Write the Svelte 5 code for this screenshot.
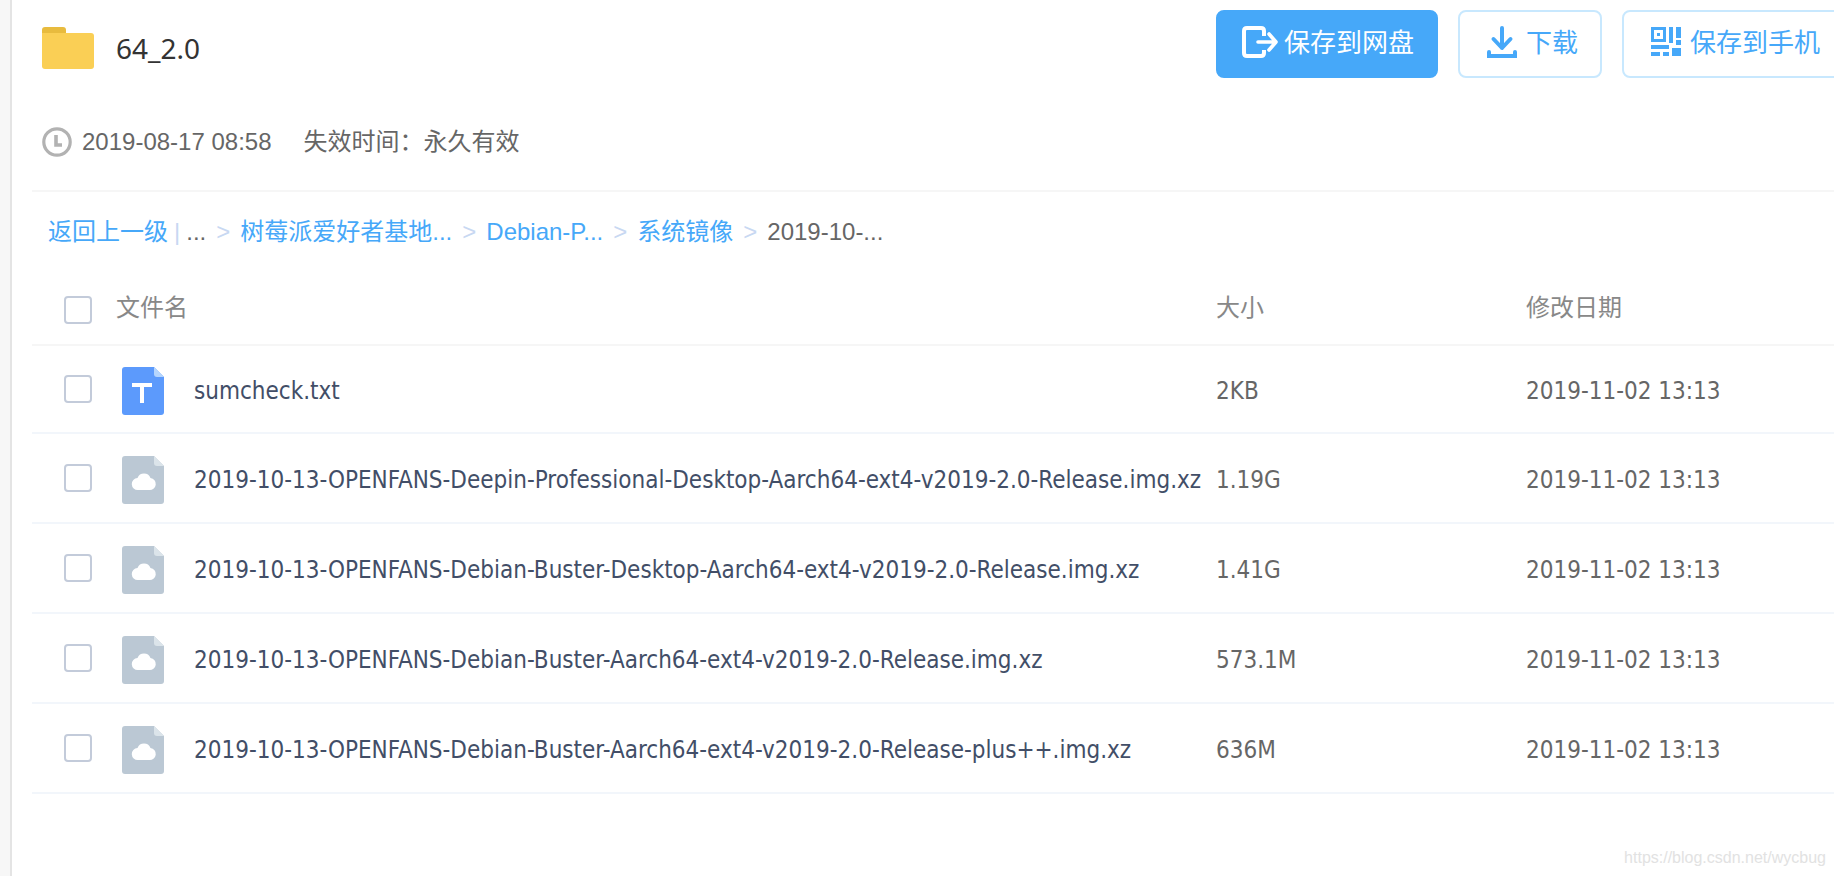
<script lang="ts">
  type FileRow = { name: string; size: string; date: string; kind: "text" | "cloud" };

  const crumbs = ["树莓派爱好者基地...", "Debian-P...", "系统镜像"];

  const files: FileRow[] = [
    {name: "sumcheck.txt", size: "2KB", date: "2019-11-02 13:13", kind: "text"},
    {name: "2019-10-13-OPENFANS-Deepin-Professional-Desktop-Aarch64-ext4-v2019-2.0-Release.img.xz", size: "1.19G", date: "2019-11-02 13:13", kind: "cloud"},
    {name: "2019-10-13-OPENFANS-Debian-Buster-Desktop-Aarch64-ext4-v2019-2.0-Release.img.xz", size: "1.41G", date: "2019-11-02 13:13", kind: "cloud"},
    {name: "2019-10-13-OPENFANS-Debian-Buster-Aarch64-ext4-v2019-2.0-Release.img.xz", size: "573.1M", date: "2019-11-02 13:13", kind: "cloud"},
    {name: "2019-10-13-OPENFANS-Debian-Buster-Aarch64-ext4-v2019-2.0-Release-plus++.img.xz", size: "636M", date: "2019-11-02 13:13", kind: "cloud"},
  ];

  let selected = $state(files.map(() => false));
  let allSelected = $derived(selected.every(Boolean));

  function toggleAll() {
    const next = !allSelected;
    selected = files.map(() => next);
  }
</script>

<main class="share">
  <header>
    <div class="title-row">
      <div class="title">
        <svg width="52" height="42" viewBox="0 0 52 42" aria-hidden="true">
          <path d="M0 9V3q0-3 3-3h18q3 0 3 3v6z" fill="#e8bb3e" />
          <path d="M0 6h49q3 0 3 3v30q0 3-3 3H3q-3 0-3-3z" fill="#facf55" />
        </svg>
        <h1>64_2.0</h1>
      </div>
      <div class="actions">
        <button class="btn btn-primary" type="button">
          <svg width="36" height="32" viewBox="0 0 36 32" fill="none" stroke="currentColor" stroke-width="4" aria-hidden="true">
            <path d="M22 10V5q0-3-3-3H5Q2 2 2 5v22q0 3 3 3h14q3 0 3-3v-3" />
            <path d="M16 16h17M27 8l7 8-7 8" stroke-linecap="round" stroke-linejoin="round" stroke-width="3.6" />
          </svg>
          保存到网盘
        </button>
        <button class="btn" type="button">
          <svg width="36" height="32" viewBox="0 0 36 32" fill="none" stroke="currentColor" stroke-width="4" stroke-linecap="round" aria-hidden="true">
            <path d="M18 2v20M9.500 13l8.500 9 8.500-9" stroke-linejoin="round" />
            <path d="M5 26v4h26v-4" />
          </svg>
          下载
        </button>
        <button class="btn" type="button">
          <svg width="36" height="32" viewBox="0 0 36 32" fill="currentColor" aria-hidden="true">
            <path d="M3 1h15v15H3zM6 4v9h9V4z" fill-rule="evenodd" />
            <path d="M9 7h3v3H9zM21 1h4v16h-4zM28 1h5v11h-5zM28 14h5v5h-5zM3 19h18v4H3zM24 22h9v8h-9zM3 26h9v4H3zM15 26h6v4h-6z" />
          </svg>
          保存到手机
        </button>
      </div>
    </div>
    <div class="meta">
      <svg width="30" height="30" viewBox="0 0 30 30" fill="none" aria-hidden="true">
        <circle cx="15" cy="15" r="13.200" stroke="#b2b2b2" stroke-width="3.200" />
        <path d="M14 8v10h6" stroke="#b2b2b2" stroke-width="3.600" />
      </svg>
      <time>2019-08-17 08:58</time>
      <span class="expiry">失效时间：永久有效</span>
    </div>
  </header>

  <nav>
    <a href="#/up">返回上一级</a>
    <span class="bar">|</span>
    <span>...</span>
    {#each crumbs as crumb}
      <span class="sep">&gt;</span>
      <a href="#/{crumb}">{crumb}</a>
    {/each}
    <span class="sep">&gt;</span>
    <span>2019-10-...</span>
  </nav>

  <table>
    <thead>
      <tr>
        <th class="col-check"><input type="checkbox" aria-label="全选" checked={allSelected} onchange={toggleAll} /></th>
        <th>文件名</th>
        <th class="col-size">大小</th>
        <th class="col-date">修改日期</th>
      </tr>
    </thead>
    <tbody>
      {#each files as file, i}
        <tr>
          <td class="col-check"><input type="checkbox" aria-labelledby="file-{i}" bind:checked={selected[i]} /></td>
          <td>
            <div class="file">
              <svg width="42" height="48" viewBox="0 0 42 48" aria-hidden="true">
                {#if file.kind === "text"}
                  <path d="M3 0h29l10 10v35q0 3-3 3H3q-3 0-3-3V3q0-3 3-3z" fill="#5c9afc" />
                  <path d="M32 0l10 10h-7q-3 0-3-3z" fill="#b5d5fd" />
                  <path d="M10 18h20M20 18v18" stroke="#fff" stroke-width="4" />
                {:else}
                  <path d="M3 0h29l10 10v35q0 3-3 3H3q-3 0-3-3V3q0-3 3-3z" fill="#bbc8d4" />
                  <path d="M32 0l10 10h-7q-3 0-3-3z" fill="#dbe4ea" />
                  <path d="M16 34a6 6 0 0 1-.500-12 7 7 0 0 1 13 0A6 6 0 0 1 27 34z" fill="#fff" />
                {/if}
              </svg>
              <a id="file-{i}" href="#/{file.name}">{file.name}</a>
            </div>
          </td>
          <td>{file.size}</td>
          <td>{file.date}</td>
        </tr>
      {/each}
    </tbody>
  </table>

  <span class="watermark">https://blog.csdn.net/wycbug</span>
</main>

<style>
  :global(body) {
    margin: 0;
    background: #fff;
    overflow: hidden;
  }
  .share {
    position: relative;
    box-sizing: border-box;
    min-height: 100vh;
    padding-left: 20px;
    border-left: 2px solid #e4e4e4;
    margin-left: 10px;
    box-shadow: -10px 0 0 #f7f7f7;
    color: #666;
    font: 24px/32px "Liberation Sans", "Noto Sans CJK SC", sans-serif;
  }
  svg {
    flex: none;
    display: block;
  }
  a {
    color: #46a8f9;
    text-decoration: none;
  }

  header {
    padding-top: 10px;
    border-bottom: 2px solid #f6f6f6;
  }
  .title-row {
    display: flex;
    height: 76px;
    padding-left: 10px;
  }
  .title {
    flex: 1;
    display: flex;
    align-items: center;
    gap: 22px;
  }
  h1 {
    margin: 0;
    color: #333;
    font: 28px/40px "Noto Sans", sans-serif;
  }
  /* lines up with the size and date columns, the last button may run off */
  .actions {
    flex: 0 0 618px;
    min-width: 0;
    display: flex;
    align-items: flex-start;
    gap: 20px;
  }
  .btn {
    flex: none;
    box-sizing: border-box;
    display: flex;
    align-items: center;
    gap: 6px;
    height: 68px;
    padding: 0 22px 2px 24px;
    border: 2px solid #c8e8fe;
    border-radius: 8px;
    background: #fff;
    color: #46a8f9;
    font: inherit;
    font-size: 26px;
    white-space: nowrap;
    cursor: pointer;
  }
  .btn svg {
    margin-bottom: 2px;
  }
  .btn-primary {
    border-color: #46a8f9;
    background: #46a8f9;
    color: #fff;
  }
  .meta {
    display: flex;
    align-items: center;
    height: 96px;
    padding: 8px 0 0 10px;
  }
  .meta time {
    margin-left: 10px;
  }
  .expiry {
    margin-left: 32px;
  }

  nav {
    display: flex;
    align-items: center;
    height: 80px;
    padding-left: 16px;
    white-space: nowrap;
  }
  .bar {
    margin: 0 6px;
    color: #c8d8f2;
  }
  .sep {
    margin: 0 10px;
    color: #c8d8f2;
  }

  table {
    width: 100%;
    border-collapse: separate;
    border-spacing: 0;
    table-layout: fixed;
  }
  th, td {
    box-sizing: border-box;
    padding: 0;
    text-align: left;
    white-space: nowrap;
  }
  th {
    height: 74px;
    border-bottom: 2px solid #f6f6f6;
    color: #888;
    font-weight: normal;
  }
  td {
    height: 90px;
    padding-top: 3px;
    border-bottom: 2px solid #f2f6fb;
    font-family: "DejaVu Sans Condensed", "DejaVu Sans", sans-serif;
    font-size: 24px;
  }
  tbody tr:first-child td {
    height: 88px;
  }
  .col-check {
    width: 84px;
    padding-top: 0;
    padding-left: 32px;
  }
  th.col-check {
    padding-top: 4px;
  }
  .col-size {
    width: 310px;
  }
  .col-date {
    width: 308px;
  }
  input[type="checkbox"] {
    appearance: none;
    display: block;
    box-sizing: border-box;
    width: 28px;
    height: 28px;
    margin: 0;
    border: 2px solid #c3cbda;
    border-radius: 4px;
    background: #fff;
  }
  input[type="checkbox"]:checked {
    border-color: #46a8f9;
    background: #46a8f9;
  }
  .file {
    display: flex;
    align-items: center;
    gap: 30px;
    padding-left: 6px;
  }
  .file a {
    color: #424e67;
  }

  .watermark {
    position: absolute;
    right: 8px;
    bottom: 8px;
    color: #e2e2e2;
    font-size: 16px;
    line-height: 20px;
  }
</style>
